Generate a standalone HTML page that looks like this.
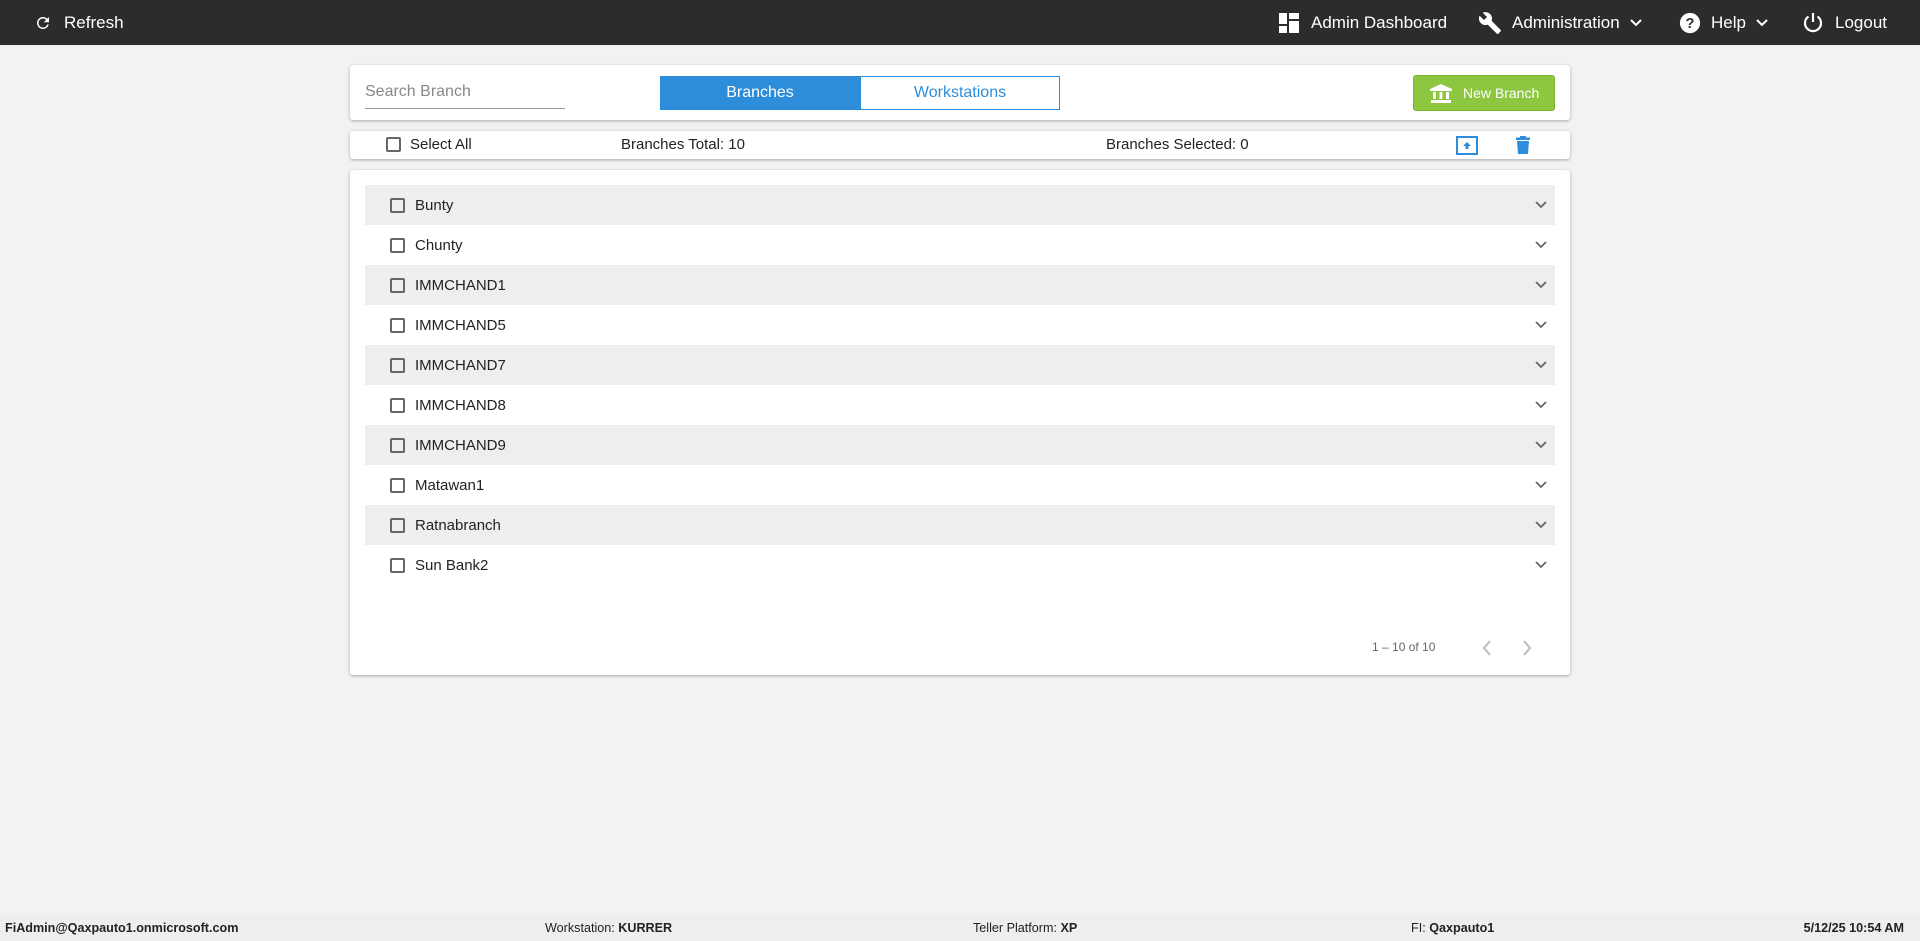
<!DOCTYPE html>
<html><head><meta charset="utf-8"><style>
*{box-sizing:border-box;margin:0;padding:0}
body{width:1920px;height:941px;background:#f2f2f2;font-family:"Liberation Sans",Arial,sans-serif;position:relative;overflow:hidden;color:#222}
.nav{position:absolute;left:0;top:0;width:1920px;height:45px;background:#2c2c2c;color:#fff;font-size:17px}
.nav .it{position:absolute;top:0;height:45px;display:flex;align-items:center;gap:10px}
.card{position:absolute;background:#fff;border-radius:3px;box-shadow:0 1px 3px rgba(0,0,0,.3)}
.cb{display:inline-block;width:15px;height:15px;border:2px solid #666;border-radius:2px;position:absolute}
.row{position:absolute;left:365px;width:1190px;height:40px;font-size:15px}
.row.g{background:#eeeeee}
.row span{position:absolute;left:50px;top:12px}
.row .cb{left:25px;top:13px}
.row svg{position:absolute;left:1170px;top:16px}
.abs{position:absolute}
.foot{position:absolute;left:0;top:915px;width:1920px;height:26px;background:#eceef0;font-size:12.6px}
.foot div{position:absolute;top:6px}
</style></head><body>
<div class="nav">
 <div class="it" style="left:34px"><svg width="18" height="18" viewBox="0 0 24 24"><path d="M17.65 6.35A7.96 7.96 0 0 0 12 4a8 8 0 1 0 7.73 10h-2.08A6 6 0 1 1 12 6c1.66 0 3.14.69 4.22 1.78L13 11h7V4l-2.35 2.35z" fill="#fff"/></svg><span style="margin-left:2px">Refresh</span></div>
 <div class="it" style="left:1279px"><svg width="20" height="20" viewBox="0 0 20 20" fill="#fff"><rect x="0" y="0" width="8" height="11"/><rect x="10" y="0" width="10" height="6"/><rect x="10" y="8" width="10" height="12"/><rect x="0" y="13" width="8" height="7"/></svg><span style="margin-left:2px">Admin Dashboard</span></div>
 <div class="it" style="left:1478px"><svg width="24" height="24" viewBox="0 0 24 24"><path d="M22.7 19l-9.1-9.1c.9-2.3.4-5-1.5-6.9-2-2-5-2.4-7.4-1.3L9 6 6 9 1.6 4.7C.4 7.1.9 10.1 2.9 12.1c1.9 1.9 4.6 2.4 6.9 1.5l9.1 9.1c.4.4 1 .4 1.4 0l2.3-2.3c.5-.4.5-1.1.1-1.4z" fill="#fff"/></svg><span>Administration</span><svg width="12" height="8" viewBox="0 0 12 8"><path d="M1 1l5 5 5-5" stroke="#fff" stroke-width="2" fill="none"/></svg></div>
 <div class="it" style="left:1679px"><svg width="22" height="22" viewBox="0 0 24 24"><circle cx="12" cy="12" r="11" fill="#fff"/><text x="12" y="17.5" font-size="16" font-weight="bold" text-anchor="middle" fill="#2c2c2c" font-family="Liberation Sans">?</text></svg><span>Help</span><svg width="12" height="8" viewBox="0 0 12 8"><path d="M1 1l5 5 5-5" stroke="#fff" stroke-width="2" fill="none"/></svg></div>
 <div class="it" style="left:1803px"><svg width="20" height="22" viewBox="0 0 20 22"><path d="M10 1v9" stroke="#fff" stroke-width="2.2"/><path d="M5.5 4.5a8 8 0 1 0 9 0" stroke="#fff" stroke-width="2.2" fill="none"/></svg><span style="margin-left:2px">Logout</span></div>
</div>

<div class="card" style="left:350px;top:65px;width:1220px;height:55px">
 <div class="abs" style="left:15px;top:18px;font-size:16px;color:#888">Search Branch</div>
 <div class="abs" style="left:15px;top:43px;width:200px;height:1px;background:#999"></div>
 <div class="abs" style="left:310px;top:11px;width:200px;height:34px;background:#2e8ddb;color:#fff;font-size:16px;text-align:center;line-height:34px">Branches</div>
 <div class="abs" style="left:510px;top:11px;width:200px;height:34px;border:1px solid #2e8ddb;color:#2e8ddb;font-size:16px;text-align:center;line-height:32px">Workstations</div>
 <div class="abs" style="left:1063px;top:10px;width:142px;height:36px;background:#8dc63f;border-radius:3px;border:1px solid #7cb32e;color:#fff;font-size:14px;line-height:34px">
  <svg class="abs" style="left:16px;top:8px" width="22" height="19" viewBox="0 0 22 19" fill="#fff"><path d="M11 0L0 5v2h22V5z"/><rect x="3" y="8" width="3" height="7"/><rect x="9.5" y="8" width="3" height="7"/><rect x="16" y="8" width="3" height="7"/><rect x="1" y="16" width="20" height="3"/></svg>
  <span style="position:absolute;left:49px">New Branch</span></div>
</div>

<div class="card" style="left:350px;top:131px;width:1220px;height:28px;font-size:15px">
 <span class="cb" style="left:36px;top:6px"></span>
 <div class="abs" style="left:60px;top:5px">Select All</div>
 <div class="abs" style="left:271px;top:5px">Branches Total: 10</div>
 <div class="abs" style="left:756px;top:5px">Branches Selected: 0</div>
 <svg class="abs" style="left:1106px;top:5px" width="22" height="19" viewBox="0 0 22 19"><rect x="1" y="1" width="20" height="17" fill="none" stroke="#2e8ddb" stroke-width="2"/><path d="M11 6l-4 4h2.5v3h3v-3H15z" fill="#2e8ddb"/></svg>
 <svg class="abs" style="left:1166px;top:5px" width="14" height="18" viewBox="0 0 14 18" fill="#2e8ddb"><rect x="0" y="1.5" width="14" height="2.5"/><rect x="4" y="0" width="6" height="2"/><path d="M1 5h12l-1 13H2z"/></svg>
</div>

<div class="card" style="left:350px;top:170px;width:1220px;height:505px"></div>
<div class="row g" style="top:185px"><span class="cb"></span><span>Bunty</span><svg width="12" height="8" viewBox="0 0 12 8"><path d="M1 1l5 5 5-5" stroke="#666" stroke-width="1.8" fill="none"/></svg></div>
<div class="row" style="top:225px"><span class="cb"></span><span>Chunty</span><svg width="12" height="8" viewBox="0 0 12 8"><path d="M1 1l5 5 5-5" stroke="#666" stroke-width="1.8" fill="none"/></svg></div>
<div class="row g" style="top:265px"><span class="cb"></span><span>IMMCHAND1</span><svg width="12" height="8" viewBox="0 0 12 8"><path d="M1 1l5 5 5-5" stroke="#666" stroke-width="1.8" fill="none"/></svg></div>
<div class="row" style="top:305px"><span class="cb"></span><span>IMMCHAND5</span><svg width="12" height="8" viewBox="0 0 12 8"><path d="M1 1l5 5 5-5" stroke="#666" stroke-width="1.8" fill="none"/></svg></div>
<div class="row g" style="top:345px"><span class="cb"></span><span>IMMCHAND7</span><svg width="12" height="8" viewBox="0 0 12 8"><path d="M1 1l5 5 5-5" stroke="#666" stroke-width="1.8" fill="none"/></svg></div>
<div class="row" style="top:385px"><span class="cb"></span><span>IMMCHAND8</span><svg width="12" height="8" viewBox="0 0 12 8"><path d="M1 1l5 5 5-5" stroke="#666" stroke-width="1.8" fill="none"/></svg></div>
<div class="row g" style="top:425px"><span class="cb"></span><span>IMMCHAND9</span><svg width="12" height="8" viewBox="0 0 12 8"><path d="M1 1l5 5 5-5" stroke="#666" stroke-width="1.8" fill="none"/></svg></div>
<div class="row" style="top:465px"><span class="cb"></span><span>Matawan1</span><svg width="12" height="8" viewBox="0 0 12 8"><path d="M1 1l5 5 5-5" stroke="#666" stroke-width="1.8" fill="none"/></svg></div>
<div class="row g" style="top:505px"><span class="cb"></span><span>Ratnabranch</span><svg width="12" height="8" viewBox="0 0 12 8"><path d="M1 1l5 5 5-5" stroke="#666" stroke-width="1.8" fill="none"/></svg></div>
<div class="row" style="top:545px"><span class="cb"></span><span>Sun Bank2</span><svg width="12" height="8" viewBox="0 0 12 8"><path d="M1 1l5 5 5-5" stroke="#666" stroke-width="1.8" fill="none"/></svg></div>

<div class="abs" style="left:1372px;top:640px;font-size:12px;color:#666">1 – 10 of 10</div>
<svg class="abs" style="left:1482px;top:640px" width="10" height="16" viewBox="0 0 10 16"><path d="M8 1L2 8l6 7" stroke="#bbb" stroke-width="2" fill="none"/></svg>
<svg class="abs" style="left:1522px;top:640px" width="10" height="16" viewBox="0 0 10 16"><path d="M2 1l6 7-6 7" stroke="#bbb" stroke-width="2" fill="none"/></svg>

<div class="foot">
 <div style="left:5px;font-weight:bold">FiAdmin@Qaxpauto1.onmicrosoft.com</div>
 <div style="left:545px">Workstation: <b>KURRER</b></div>
 <div style="left:973px">Teller Platform: <b>XP</b></div>
 <div style="left:1411px">FI: <b>Qaxpauto1</b></div>
 <div style="right:16px;font-weight:bold">5/12/25 10:54 AM</div>
</div>
</body></html>
